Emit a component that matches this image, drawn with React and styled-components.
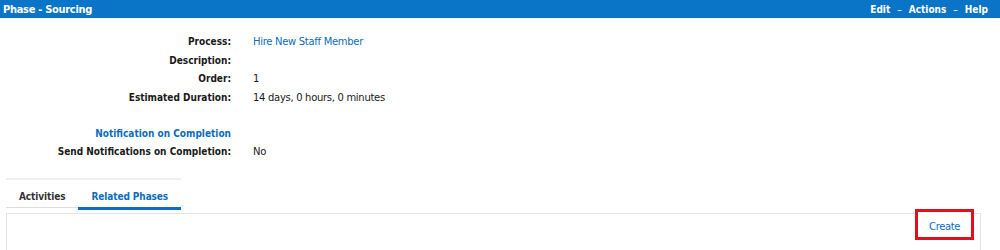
import React from "react";
import styled, { createGlobalStyle } from "styled-components";

const GlobalStyle = createGlobalStyle`
  body {
    margin: 0;
    background: #ffffff;
    font-family: "DejaVu Sans", Verdana, sans-serif;
    font-size: 10px;
    letter-spacing: -0.3px;
    color: #1a1a1a;
  }
`;

const boldFont = `"DejaVu Sans Condensed", "DejaVu Sans", Verdana, sans-serif`;

const details = [
  { label: "Process:", value: "Hire New Staff Member", link: true },
  { label: "Description:", value: "" },
  { label: "Order:", value: "1" },
  { label: "Estimated Duration:", value: "14 days, 0 hours, 0 minutes" },
];

const App = () => {
  return (
    <Page>
      <GlobalStyle />
      <Header>
        <h1>Phase - Sourcing</h1>
        <nav>
          <span>Edit</span>
          <span className="sep">–</span>
          <span>Actions</span>
          <span className="sep">–</span>
          <span>Help</span>
        </nav>
      </Header>

      <Details>
        {details.map((d) => (
          <React.Fragment key={d.label}>
            <Label>{d.label}</Label>
            <Value $link={d.link}>{d.value}</Value>
          </React.Fragment>
        ))}
      </Details>

      <Details $section>
        <SectionTitle>Notification on Completion</SectionTitle>
        <Value />
        <Label>Send Notifications on Completion:</Label>
        <Value>No</Value>
      </Details>

      <Tabs>
        <TabList>
          <Tab>Activities</Tab>
          <Tab $active>Related Phases</Tab>
        </TabList>
        <Panel>
          <CreateButton>Create</CreateButton>
        </Panel>
      </Tabs>
    </Page>
  );
};

const Page = styled.div`
  width: 1000px;
  height: 250px;
  overflow: hidden;
`;

const Header = styled.div`
  height: 18px;
  background: #0a75c6;
  color: #ffffff;
  display: flex;
  align-items: center;
  justify-content: space-between;
  padding: 0 12px 0 3px;
  h1 {
    margin: 0;
    font-family: ${boldFont};
    font-size: 11px;
    font-weight: bold;
    letter-spacing: -0.3px;
  }
  nav {
    display: flex;
    gap: 7px;
    font-family: ${boldFont};
    font-size: 10px;
    font-weight: 600;
    letter-spacing: 0;
    .sep {
      font-weight: normal;
    }
  }
`;

const Details = styled.div`
  display: grid;
  grid-template-columns: 231px 1fr;
  column-gap: 22px;
  grid-auto-rows: 18.7px;
  align-items: center;
  margin-top: ${(p) => (p.$section ? "17px" : "14px")};
`;

const Label = styled.div`
  text-align: right;
  font-family: ${boldFont};
  font-weight: bold;
  letter-spacing: 0;
  white-space: nowrap;
`;

const SectionTitle = styled(Label)`
  color: #0b6dbd;
`;

const Value = styled.div`
  color: ${(p) => (p.$link ? "#0b6dbd" : "#1a1a1a")};
`;

const Tabs = styled.div`
  margin: 17px 19px 0 6px;
`;

const TabList = styled.div`
  display: inline-flex;
  border-top: 2px solid #efefef;
`;

const Tab = styled.div`
  padding: 11px 13px 0;
  height: 16px;
  font-family: ${boldFont};
  font-weight: bold;
  letter-spacing: -0.1px;
  color: ${(p) => (p.$active ? "#0b6dbd" : "#333333")};
  border-bottom: ${(p) => (p.$active ? "3px solid #0a6fc0" : "1px solid #dddddd")};
  margin-bottom: ${(p) => (p.$active ? "0" : "2px")};
`;

const Panel = styled.div`
  margin-top: 3px;
  height: 60px;
  border: 1px solid #e4e4e4;
  display: flex;
  justify-content: flex-end;
  align-items: flex-start;
  padding-right: 6px;
`;

const CreateButton = styled.div`
  margin-top: -5px;
  width: 53px;
  height: 21px;
  border: 3px solid #e0101c;
  background: #ffffff;
  color: #0b6dbd;
  display: flex;
  align-items: center;
  justify-content: center;
  padding-top: 4px;
  letter-spacing: -0.4px;
`;

export default App;
